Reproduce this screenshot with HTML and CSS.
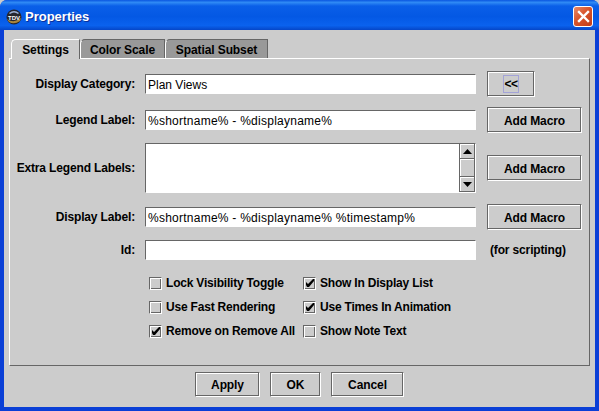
FILE: index.html
```html
<!DOCTYPE html>
<html lang="en">
	<head>
		<meta charset="UTF-8" />
		<title>Properties</title>
		<link rel="stylesheet" href="styles.css">
	</head>
	<body>
		<div class="window">
			<div class="titlebar">
				<svg class="app-icon" width="16" height="16" viewBox="0 0 16 16">
					<circle cx="8" cy="8" r="7.5" fill="#26262c" />
					<path d="M1 10 Q8 15 15 9 L14 12 Q8 16 3 13 Z" fill="#a8853c" />
					<path d="M3 4 Q8 0 13 4 L12 5 Q8 2 4 5 Z" fill="#9fb2d4" />
					<text x="8" y="10.5" class="app-icon-text">TDV</text>
				</svg>
				<span class="title">Properties</span>
				<button class="close">
					<svg width="13" height="13" viewBox="0 0 13 13">
						<path d="M2 2 L11 11 M11 2 L2 11" stroke="#fff" stroke-width="2.4" stroke-linecap="square" />
					</svg>
				</button>
			</div>
			<div class="body">
				<div class="tabs">
					<div class="tab active">Settings</div>
					<div class="tab tab-scale">Color Scale</div>
					<div class="tab tab-subset">Spatial Subset</div>
				</div>
				<div class="pane">
					<div class="row row-category">
						<label>Display Category:</label>
						<div class="field">Plan Views</div>
						<button class="btn btn-small"><span class="focus">&lt;&lt;</span></button>
					</div>
					<div class="row row-legend">
						<label>Legend Label:</label>
						<div class="field field-macro">%shortname% - %displayname%</div>
						<button class="btn btn-macro">Add Macro</button>
					</div>
					<div class="row row-extra">
						<label>Extra Legend Labels:</label>
						<div class="field field-area">
							<div class="scrollbar">
								<div class="arrow"><svg width="9" height="5" viewBox="0 0 9 5"><path d="M4.5 0 L9 5 L0 5 Z" /></svg></div>
								<div class="thumb"></div>
								<div class="arrow"><svg width="9" height="5" viewBox="0 0 9 5"><path d="M0 0 L9 0 L4.5 5 Z" /></svg></div>
							</div>
						</div>
						<button class="btn btn-macro">Add Macro</button>
					</div>
					<div class="row row-display">
						<label>Display Label:</label>
						<div class="field field-macro">%shortname% - %displayname% %timestamp%</div>
						<button class="btn btn-macro">Add Macro</button>
					</div>
					<div class="row row-id">
						<label>Id:</label>
						<div class="field"></div>
						<span class="hint">(for scripting)</span>
					</div>
					<div class="checks">
						<div class="check"><span class="box"></span>Lock Visibility Toggle</div>
						<div class="check"><span class="box"><svg class="tick" width="8" height="8" viewBox="0 0 8 8"><path d="M0 3 L2 5 L7 0 L8 0 L8 2 L3 8 L1 8 L0 6 Z" /></svg></span>Show In Display List</div>
						<div class="check"><span class="box"></span>Use Fast Rendering</div>
						<div class="check"><span class="box"><svg class="tick" width="8" height="8" viewBox="0 0 8 8"><path d="M0 3 L2 5 L7 0 L8 0 L8 2 L3 8 L1 8 L0 6 Z" /></svg></span>Use Times In Animation</div>
						<div class="check"><span class="box"><svg class="tick" width="8" height="8" viewBox="0 0 8 8"><path d="M0 3 L2 5 L7 0 L8 0 L8 2 L3 8 L1 8 L0 6 Z" /></svg></span>Remove on Remove All</div>
						<div class="check"><span class="box"></span>Show Note Text</div>
					</div>
				</div>
				<div class="actions">
					<button class="btn btn-apply">Apply</button>
					<button class="btn btn-ok">OK</button>
					<button class="btn btn-cancel">Cancel</button>
				</div>
			</div>
		</div>
	</body>
</html>
```

FILE: styles.css
```css
html,
body {
	margin: 0;
	padding: 0;
}

body {
	width: 599px;
	height: 411px;
	overflow: hidden;
	font-family: 'Liberation Sans', Arial, sans-serif;
	font-size: 12px;
	color: #000000;
	background-color: #cccccc;
}

.window {
	width: 599px;
	height: 411px;
	box-sizing: border-box;
	display: flex;
	flex-direction: column;
	background-color: #0a3fd6;
	border-radius: 7px 7px 0 0;
	overflow: hidden;
}

.titlebar {
	height: 30px;
	flex: none;
	box-sizing: border-box;
	display: flex;
	align-items: center;
	padding: 3px 6px 0 6px;
	background: linear-gradient(to bottom, #0a56e0 0%, #2f8af5 8%, #0a5fe8 20%, #0458e4 55%, #0a62ee 85%, #0546c8 100%);
}

.app-icon {
	flex: none;
}

.app-icon-text {
	font-size: 6px;
	font-weight: bold;
	fill: #ffffff;
	text-anchor: middle;
}

.title {
	margin-left: 3px;
	font-size: 13px;
	font-weight: bold;
	color: #ffffff;
	text-shadow: 1px 1px 0 #0a2f9a;
}

.close {
	margin-left: auto;
	width: 20px;
	height: 21px;
	padding: 0;
	border: 1px solid #ffffff;
	border-radius: 3px;
	background: linear-gradient(135deg, #e88a68 0%, #d8542c 45%, #c03c18 100%);
	display: flex;
	align-items: center;
	justify-content: center;
}

.body {
	flex: 1;
	margin: 0 4px 4px 4px;
	background-color: #cccccc;
	padding: 9px 5px 0 5px;
	display: flex;
	flex-direction: column;
}

.tabs {
	display: flex;
	height: 19px;
	padding-left: 2px;
}

.tab {
	box-sizing: border-box;
	height: 19px;
	padding-top: 3px;
	text-align: center;
	font-weight: bold;
	letter-spacing: -0.1px;
	background-color: #999999;
	border-top: 1px solid #666666;
	border-right: 1px solid #666666;
	border-left: 1px solid #ffffff;
	border-top-left-radius: 5px;
}

.tab.active {
	width: 69px;
	height: 20px;
	position: relative;
	z-index: 1;
	background-color: #cccccc;
	border-top-color: #ffffff;
}

.tab-scale {
	width: 85px;
}

.tab-subset {
	width: 103px;
}

.pane {
	height: 308px;
	box-sizing: border-box;
	border: 1px solid;
	border-color: #ffffff #666666 #666666 #ffffff;
	padding: 12px 0 0 0;
}

.row {
	display: flex;
	align-items: center;
	font-weight: bold;
	letter-spacing: -0.15px;
}

.row label {
	width: 125px;
	text-align: right;
	flex: none;
}

.field {
	width: 331px;
	height: 20px;
	line-height: 20px;
	margin-left: 10px;
	margin-right: 11px;
	flex: none;
	box-sizing: border-box;
	padding-left: 2px;
	border: 1px solid;
	border-color: #666666 #ffffff #ffffff #666666;
	background-color: #ffffff;
	font-weight: normal;
	letter-spacing: 0;
	white-space: nowrap;
	overflow: hidden;
}

.field-macro {
	letter-spacing: 0.25px;
}

.btn {
	box-sizing: border-box;
	padding: 0;
	font-family: inherit;
	font-size: 12px;
	font-weight: bold;
	letter-spacing: -0.1px;
	color: #000000;
	background-color: #cccccc;
	border: 1px solid;
	border-color: #666666 #ffffff #ffffff #666666;
	box-shadow: inset -1px -1px 0 #666666, inset 1px 1px 0 #ffffff;
}

.btn-small {
	width: 48px;
	height: 26px;
	display: flex;
	align-items: center;
	justify-content: center;
}

.focus {
	width: 16px;
	height: 18px;
	line-height: 16px;
	box-sizing: border-box;
	border: 1px solid #a3a3d7;
	font-weight: bold;
	letter-spacing: -0.5px;
}

.btn-macro {
	width: 95px;
	height: 26px;
	padding-top: 1px;
}

.row-category {
	height: 26px;
}

.row-legend {
	height: 26px;
	margin-top: 10px;
}

.row-extra {
	height: 50px;
	margin-top: 10px;
}

.row-display {
	height: 26px;
	margin-top: 11px;
}

.row-id {
	height: 20px;
	margin-top: 10px;
}

.field-area {
	height: 50px;
	position: relative;
}

.scrollbar {
	position: absolute;
	top: 0;
	right: 0;
	bottom: 0;
	width: 15px;
	display: flex;
	flex-direction: column;
	background-color: #cccccc;
	border-left: 1px solid #666666;
}

.arrow {
	height: 15px;
	flex: none;
	box-sizing: border-box;
	display: flex;
	align-items: center;
	justify-content: center;
	border-bottom: 1px solid #666666;
	border-right: 1px solid #666666;
	box-shadow: inset 1px 1px 0 #ffffff;
}

.thumb {
	flex: 1;
	box-sizing: border-box;
	border-bottom: 1px solid #666666;
	border-right: 1px solid #666666;
	box-shadow: inset 1px 1px 0 #ffffff;
}

.hint {
	margin-left: 3px;
}

.checks {
	display: grid;
	grid-template-columns: 154px 1fr;
	grid-auto-rows: 24px;
	margin: 11px 0 0 139px;
	font-weight: bold;
	letter-spacing: -0.2px;
}

.check {
	display: flex;
	align-items: center;
	white-space: nowrap;
}

.box {
	width: 13px;
	height: 13px;
	margin-right: 4px;
	flex: none;
	box-sizing: border-box;
	display: flex;
	align-items: center;
	justify-content: center;
	border: 1px solid;
	border-color: #666666 #ffffff #ffffff #666666;
	box-shadow: inset 1px 1px 0 #ffffff, inset -1px -1px 0 #666666;
}

.tick {
	flex: none;
}

.actions {
	display: flex;
	justify-content: center;
	gap: 10px;
	margin-top: 6px;
}

.btn-apply {
	width: 65px;
	height: 25px;
}

.btn-ok {
	width: 51px;
	height: 25px;
}

.btn-cancel {
	width: 73px;
	height: 25px;
}
```
